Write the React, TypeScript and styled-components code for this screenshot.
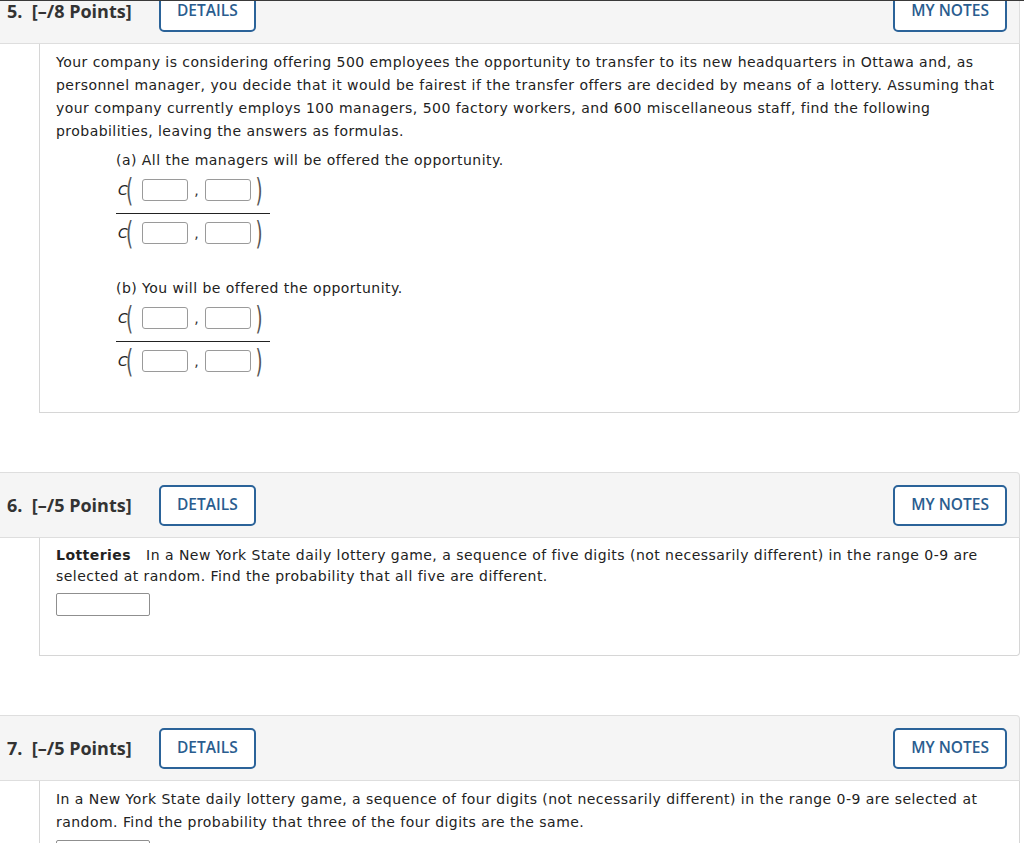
import React from "react";
import styled, { createGlobalStyle } from "styled-components";

const Global = createGlobalStyle`
  html, body { margin: 0; padding: 0; background: #fff; }
  body { font-family: "DejaVu Sans", Verdana, sans-serif; color: #222; }
`;

const Page = styled.div`
  border-top: 1px solid #3a3a3a;
  overflow: hidden;
  height: 842px;
  padding-right: 4px;
  display: flex;
  flex-direction: column;
`;

const Question = styled.section<{ $first?: boolean }>`
  margin-top: ${(p) => (p.$first ? "-23px" : "59px")};
`;

const Header = styled.header`
  height: 64px;
  background: #f5f5f5;
  border-top: 1px solid #dedede;
  border-bottom: 1px solid #dedede;
  border-right: 1px solid #dedede;
  border-radius: 0 4px 0 0;
  display: flex;
  align-items: center;
  padding: 0 12px 0 7px;
`;

const Label = styled.div`
  font-family: "Open Sans", sans-serif;
  font-weight: 700;
  font-size: 18px;
  color: #333;
  white-space: pre;
  width: 152px;
`;

const Button = styled.button`
  font-family: "Open Sans", sans-serif;
  font-weight: 600;
  font-size: 15.5px;
  color: #2a5d8f;
  background: #fff;
  border: 2px solid #2b6399;
  border-radius: 5px;
  height: 41px;
  padding: 0 16px;
  cursor: pointer;
  line-height: 1;
`;

const Spacer = styled.div`
  flex: 1;
`;

const Body = styled.div<{ $bottom: number; $lh?: number }>`
  margin-left: 39px;
  border-left: 1px solid #d6d6d6;
  border-right: 1px solid #d6d6d6;
  border-bottom: 1px solid #d6d6d6;
  border-radius: 0 0 4px 0;
  padding: 7px 8px ${(p) => p.$bottom}px 16px;
  font-size: 14px;
  letter-spacing: 0.46px;
  line-height: ${(p) => p.$lh ?? 23}px;
  white-space: nowrap;
`;

const Para = styled.p`
  margin: 0;
`;

const Part = styled.div`
  margin: 6px 0 0 60px;
`;

const Fraction = styled.div`
  display: flex;
  flex-direction: column;
  align-items: stretch;
  width: 154px;
  margin-top: 3px;
  margin-bottom: 29px;
`;

const FracRow = styled.div`
  display: flex;
  align-items: center;
  height: 30px;
  padding: 0 1px 0 2px;
`;

const FracLine = styled.div`
  height: 1px;
  background: #222;
  margin: 8px 0 4px 0;
`;

const CLetter = styled.span`
  font-family: "DejaVu Sans", sans-serif;
  font-style: italic;
  font-size: 14px;
  letter-spacing: 0;
  width: 8px;
  color: #222;
`;

const Paren = styled.span<{ $close?: boolean }>`
  font-family: "DejaVu Sans", sans-serif;
  font-weight: 400;
  font-size: 26px;
  color: #555;
  display: inline-block;
  width: 16px;
  text-align: ${(p) => (p.$close ? "center" : "left")};
  letter-spacing: 0;
  transform: scaleY(1.2) scaleX(0.7);
  transform-origin: ${(p) => (p.$close ? "center" : "left center")};
  line-height: 30px;
`;

const Box = styled.input`
  width: 46px;
  height: 22px;
  box-sizing: border-box;
  border: 1px solid #9a9a9a;
  border-radius: 3px;
  background: #fff;
  margin: 0;
  padding: 0;
`;

const Comma = styled.span`
  font-size: 14px;
  width: 17px;
  text-align: center;
  letter-spacing: 0;
  color: #333;
`;

const Answer = styled.input<{ $top: number }>`
  display: block;
  width: 94px;
  height: 23px;
  box-sizing: border-box;
  border: 1px solid #8f8f8f;
  border-radius: 2px;
  margin: ${(p) => p.$top}px 0 0 0;
`;

const Bold = styled.b`
  font-weight: 700;
  margin-right: 15px;
`;

function Binom() {
  return (
    <FracRow>
      <CLetter>C</CLetter>
      <Paren>(</Paren>
      <Box aria-label="n" />
      <Comma>,</Comma>
      <Box aria-label="k" />
      <Paren $close>)</Paren>
    </FracRow>
  );
}

function Frac() {
  return (
    <Fraction>
      <Binom />
      <FracLine />
      <Binom />
    </Fraction>
  );
}

function QHeader({ label }: { label: string }) {
  return (
    <Header>
      <Label>{label}</Label>
      <Button>DETAILS</Button>
      <Spacer />
      <Button>MY NOTES</Button>
    </Header>
  );
}

export default function App() {
  return (
    <>
      <Global />
      <Page>
        <Question $first>
          <QHeader label={"5.  [–/8 Points]"} />
          <Body $bottom={7}>
            <Para>
              Your company is considering offering 500 employees the opportunity to transfer to its new headquarters in Ottawa and, as
              <br />
              personnel manager, you decide that it would be fairest if the transfer offers are decided by means of a lottery. Assuming that
              <br />
              your company currently employs 100 managers, 500 factory workers, and 600 miscellaneous staff, find the following
              <br />
              probabilities, leaving the answers as formulas.
            </Para>
            <Part>
              <div>(a) All the managers will be offered the opportunity.</div>
              <Frac />
              <div>(b) You will be offered the opportunity.</div>
              <Frac />
            </Part>
          </Body>
        </Question>
        <Question>
          <QHeader label={"6.  [–/5 Points]"} />
          <Body $bottom={39} $lh={21}>
            <Para>
              <Bold>Lotteries</Bold>In a New York State daily lottery game, a sequence of five digits (not necessarily different) in the range 0-9 are
              <br />
              selected at random. Find the probability that all five are different.
            </Para>
            <Answer aria-label="answer" $top={6} />
          </Body>
        </Question>
        <Question>
          <QHeader label={"7.  [–/5 Points]"} />
          <Body $bottom={38}>
            <Para>
              In a New York State daily lottery game, a sequence of four digits (not necessarily different) in the range 0-9 are selected at
              <br />
              random. Find the probability that three of the four digits are the same.
            </Para>
            <Answer aria-label="answer" $top={6} />
          </Body>
        </Question>
      </Page>
    </>
  );
}
